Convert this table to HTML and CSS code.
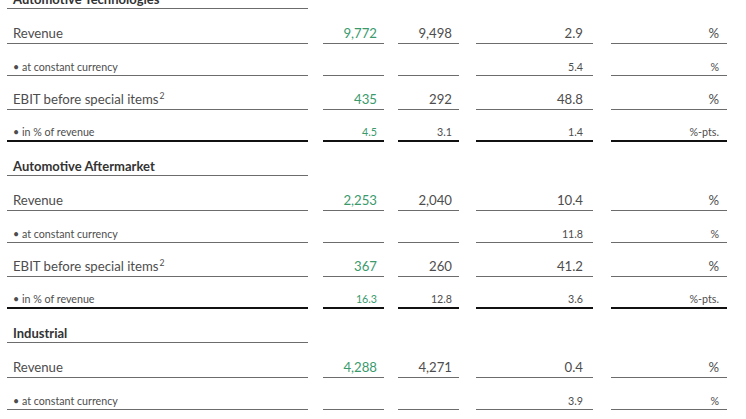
FILE: index.html
```html
<!DOCTYPE html>
<html lang="en">
<head>
<meta charset="utf-8">
<link rel="stylesheet" href="styles.css">
<title>Segments</title>
</head>
<body>
<div class="sheet">
  <div class="row head">
    <div class="cell c1 bold"><span>Automotive Technologies</span></div>
  </div>
  <div class="row big">
    <div class="cell c1"><span>Revenue</span></div>
    <div class="cell c2 green">9,772</div>
    <div class="cell c3">9,498</div>
    <div class="cell c4">2.9</div>
    <div class="cell c5">%</div>
  </div>
  <div class="row small">
    <div class="cell c1"><span>• at constant currency</span></div>
    <div class="cell c2"></div>
    <div class="cell c3"></div>
    <div class="cell c4">5.4</div>
    <div class="cell c5">%</div>
  </div>
  <div class="row big">
    <div class="cell c1"><span>EBIT before special items<sup>2</sup></span></div>
    <div class="cell c2 green">435</div>
    <div class="cell c3">292</div>
    <div class="cell c4">48.8</div>
    <div class="cell c5">%</div>
  </div>
  <div class="row small thick">
    <div class="cell c1"><span>• in % of revenue</span></div>
    <div class="cell c2 green">4.5</div>
    <div class="cell c3">3.1</div>
    <div class="cell c4">1.4</div>
    <div class="cell c5">%-pts.</div>
  </div>

  <div class="row head">
    <div class="cell c1 bold"><span>Automotive Aftermarket</span></div>
  </div>
  <div class="row big">
    <div class="cell c1"><span>Revenue</span></div>
    <div class="cell c2 green">2,253</div>
    <div class="cell c3">2,040</div>
    <div class="cell c4">10.4</div>
    <div class="cell c5">%</div>
  </div>
  <div class="row small">
    <div class="cell c1"><span>• at constant currency</span></div>
    <div class="cell c2"></div>
    <div class="cell c3"></div>
    <div class="cell c4">11.8</div>
    <div class="cell c5">%</div>
  </div>
  <div class="row big">
    <div class="cell c1"><span>EBIT before special items<sup>2</sup></span></div>
    <div class="cell c2 green">367</div>
    <div class="cell c3">260</div>
    <div class="cell c4">41.2</div>
    <div class="cell c5">%</div>
  </div>
  <div class="row small thick">
    <div class="cell c1"><span>• in % of revenue</span></div>
    <div class="cell c2 green">16.3</div>
    <div class="cell c3">12.8</div>
    <div class="cell c4">3.6</div>
    <div class="cell c5">%-pts.</div>
  </div>

  <div class="row head">
    <div class="cell c1 bold"><span>Industrial</span></div>
  </div>
  <div class="row big">
    <div class="cell c1"><span>Revenue</span></div>
    <div class="cell c2 green">4,288</div>
    <div class="cell c3">4,271</div>
    <div class="cell c4">0.4</div>
    <div class="cell c5">%</div>
  </div>
  <div class="row small">
    <div class="cell c1"><span>• at constant currency</span></div>
    <div class="cell c2"></div>
    <div class="cell c3"></div>
    <div class="cell c4">3.9</div>
    <div class="cell c5">%</div>
  </div>
</div>
</body>
</html>
```

FILE: styles.css
```css
html, body {
  margin: 0;
  padding: 0;
  background: #ffffff;
}
body {
  font-family: Lato, "Open Sans", "Liberation Sans", sans-serif;
  color: #4d4d4d;
  overflow: hidden;
}
.sheet {
  margin-top: -25px;
  padding-left: 7px;
}
.row {
  display: flex;
  align-items: stretch;
}
.row.head { height: 34px; font-size: 13px; }
.row.big { height: 35px; font-size: 13.2px; }
.row.big + .row.small { height: 32px; }
.row.small + .row.big { height: 34px; }
.row.small { height: 32px; font-size: 10.7px; }
.cell {
  box-sizing: border-box;
  border-bottom: 1px solid #6c6c6c;
  display: flex;
  align-items: flex-end;
  justify-content: flex-end;
  line-height: 1;
  white-space: nowrap;
}
.row.big .cell { padding-bottom: 3px; }
.row.small .cell { padding-bottom: 2px; }
.row.head .cell { padding-bottom: 2px; }
.row.thick .cell { border-bottom: 2px solid #111111; }
.c1 { width: 301px; justify-content: flex-start; padding-left: 6px; }
.c2 { width: 61px; margin-left: 15px; padding-right: 7px; }
.c3 { width: 61px; margin-left: 14px; padding-right: 7px; }
.c4 { width: 117px; margin-left: 17px; padding-right: 10px; }
.c5 { width: 116px; margin-left: 18px; padding-right: 8px; }
.bold { font-weight: 700; color: #333333; }
.green { color: #3a9a6c; }
sup {
  font-size: 0.65em;
  line-height: 0;
  position: relative;
  top: 0.05em;
  vertical-align: super;
  margin-left: 1px;
}
```
